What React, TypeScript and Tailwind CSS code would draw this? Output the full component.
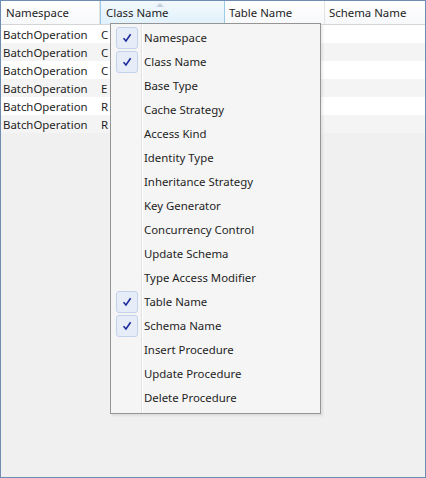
import React from "react";

const rows = ["C", "C", "C", "E", "R", "R"];

const items = [
  { label: "Namespace", checked: true },
  { label: "Class Name", checked: true },
  { label: "Base Type" },
  { label: "Cache Strategy" },
  { label: "Access Kind" },
  { label: "Identity Type" },
  { label: "Inheritance Strategy" },
  { label: "Key Generator" },
  { label: "Concurrency Control" },
  { label: "Update Schema" },
  { label: "Type Access Modifier" },
  { label: "Table Name", checked: true },
  { label: "Schema Name", checked: true },
  { label: "Insert Procedure" },
  { label: "Update Procedure" },
  { label: "Delete Procedure" },
];

const Check = () => (
  <div className="w-[22px] h-[22px] rounded-[3px] border border-[#c3d1ea] bg-[#e6edf8] flex items-center justify-center">
    <svg width="10" height="10" viewBox="0 0 10 10">
      <path d="M1.5 5.2 L4 8 L8.6 1.2" fill="none" stroke="#1b2a9e" strokeWidth="1.6" />
    </svg>
  </div>
);

export default function App() {
  return (
    <div
      className="relative w-[426px] h-[478px] border border-[#6f8db3] bg-[#f0f0f0] text-[11.4px] text-[#1e1e1e]"
      style={{ fontFamily: '"Noto Sans", "Open Sans", sans-serif' }}
    >
      <div className="flex h-[24px] bg-gradient-to-b from-white to-[#f7f8fa] border-b border-[#d5d5d5]">
        <div className="w-[99px] pl-[5px] pt-[1px] flex items-center border-r border-[#e3e3e3]">Namespace</div>
        <div className="relative w-[125px] pl-[5px] pt-[1px] flex items-center bg-gradient-to-b from-[#f2f9fd] to-[#e1f1fb] border-x border-[#9ccbea]">
          Class Name
          <svg className="absolute left-[55px] top-[2px]" width="8" height="4" viewBox="0 0 8 4">
            <path d="M0 4 L4 0 L8 4 Z" fill="#c4d2de" />
          </svg>
        </div>
        <div className="w-[100px] pl-[4px] pt-[1px] flex items-center border-r border-[#e3e3e3]">Table Name</div>
        <div className="flex-1 pl-[4px] pt-[1px] flex items-center">Schema Name</div>
      </div>
      <div className="bg-white">
        {rows.map((c, i) => (
          <div
            key={i}
            className={`flex h-[18px] pt-[1px] items-center ${i % 2 === 1 ? "bg-[#f4f4f4]" : "bg-white"}`}
          >
            <div className="w-[100px] pl-[2px]">BatchOperation</div>
            <div>{c}</div>
          </div>
        ))}
      </div>

      <div className="absolute left-[109px] top-[22px] w-[211px] h-[391px] border border-[#959595] bg-[#f5f5f5] py-[2px] shadow-[2px_2px_2px_rgba(0,0,0,0.08)]">
        <div className="absolute left-[30px] top-0 bottom-0 w-px bg-[#e2e3e3]" />
        <div className="absolute left-[31px] top-0 bottom-0 w-px bg-white" />
        {items.map((it) => (
          <div key={it.label} className="relative flex h-[24px] items-center">
            <div className="w-[30px] flex justify-center pl-[2px]">{it.checked && <Check />}</div>
            <div className="pl-[3px]">{it.label}</div>
          </div>
        ))}
      </div>
    </div>
  );
}
